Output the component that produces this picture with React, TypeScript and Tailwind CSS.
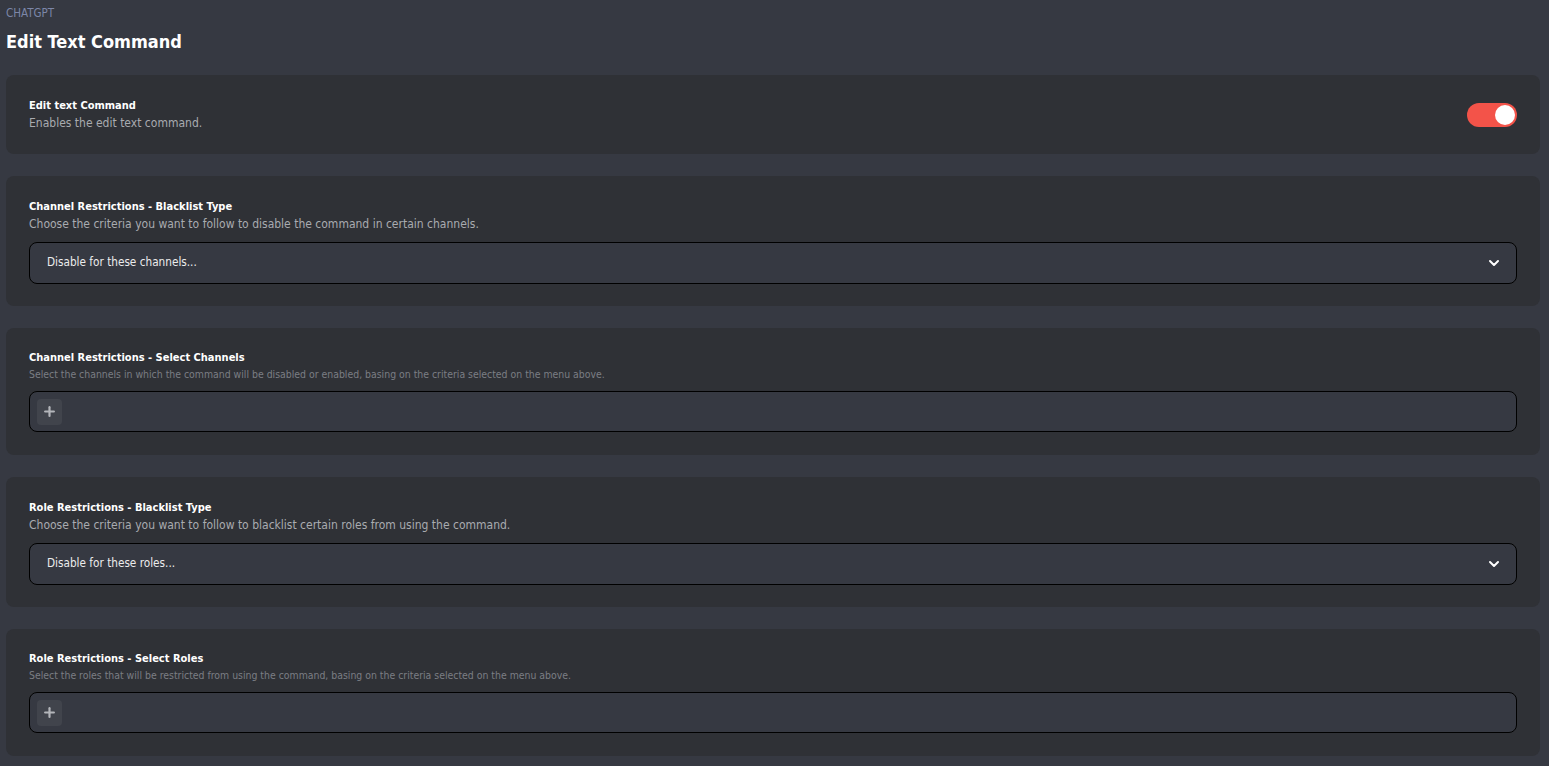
import { ChevronDown, Plus } from "lucide-react";

const font = { fontFamily: '"Liberation Sans Narrow", "DejaVu Sans Condensed", Roboto, sans-serif' };

function Card({ children, tight }: { children: React.ReactNode; tight?: boolean }) {
  return (
    <div className={tight ? "rounded-lg bg-[#2f3136] px-[23px] pt-[22px] pb-[23px]" : "rounded-lg bg-[#2f3136] px-[23px] pt-[23px] pb-[22px]"}>
      {children}
    </div>
  );
}

function Heading({ title, desc, small }: { title: string; desc: string; small?: boolean }) {
  return (
    <div>
      <div className="text-[11px] font-bold leading-4 text-white">{title}</div>
      {small ? (
        <div className="mt-[1px] text-[10.4px] leading-[14px] text-[#7b7e84]">{desc}</div>
      ) : (
        <div className="text-[12px] leading-[18px] text-[#a9abb0]">{desc}</div>
      )}
    </div>
  );
}

function SelectBox({ value }: { value: string }) {
  return (
    <div className="mt-[9px] flex h-[42px] items-center justify-between rounded-lg border border-black bg-[#363942] pl-[17px] pr-[14px]">
      <span className="text-[11.7px] text-[#ececec]">{value}</span>
      <ChevronDown size={16} strokeWidth={3} className="text-white" />
    </div>
  );
}

function TagBox() {
  return (
    <div className="mt-[10px] flex h-[41px] items-center rounded-lg border border-black bg-[#363942] pl-[7px]">
      <div className="flex h-[26px] w-[25px] items-center justify-center rounded bg-[#41444c]">
        <Plus size={15} strokeWidth={3.5} className="text-[#b3b5ba]" />
      </div>
    </div>
  );
}

export default function App() {
  return (
    <div className="min-h-screen bg-[#363942] pl-[6px] pr-[9px] pt-[5px] pb-[10px]" style={font}>
      <div className="text-[11.5px] leading-4 text-[#7c86a8]">CHATGPT</div>
      <h1 className="mt-[9px] text-[18px] font-bold leading-6 text-white">Edit Text Command</h1>

      <div className="mt-[21px] flex flex-col gap-[22px]">
        <Card>
          <div className="flex items-center justify-between">
            <Heading title="Edit text Command" desc="Enables the edit text command." />
            <div className="flex h-6 w-[50px] items-center justify-end rounded-full bg-[#f35349] pr-[2px]">
              <div className="h-5 w-5 rounded-full bg-white" />
            </div>
          </div>
        </Card>

        <Card>
          <Heading
            title="Channel Restrictions - Blacklist Type"
            desc="Choose the criteria you want to follow to disable the command in certain channels."
          />
          <SelectBox value="Disable for these channels..." />
        </Card>

        <Card tight>
          <Heading
            small
            title="Channel Restrictions - Select Channels"
            desc="Select the channels in which the command will be disabled or enabled, basing on the criteria selected on the menu above."
          />
          <TagBox />
        </Card>

        <Card>
          <Heading
            title="Role Restrictions - Blacklist Type"
            desc="Choose the criteria you want to follow to blacklist certain roles from using the command."
          />
          <SelectBox value="Disable for these roles..." />
        </Card>

        <Card tight>
          <Heading
            small
            title="Role Restrictions - Select Roles"
            desc="Select the roles that will be restricted from using the command, basing on the criteria selected on the menu above."
          />
          <TagBox />
        </Card>
      </div>
    </div>
  );
}
